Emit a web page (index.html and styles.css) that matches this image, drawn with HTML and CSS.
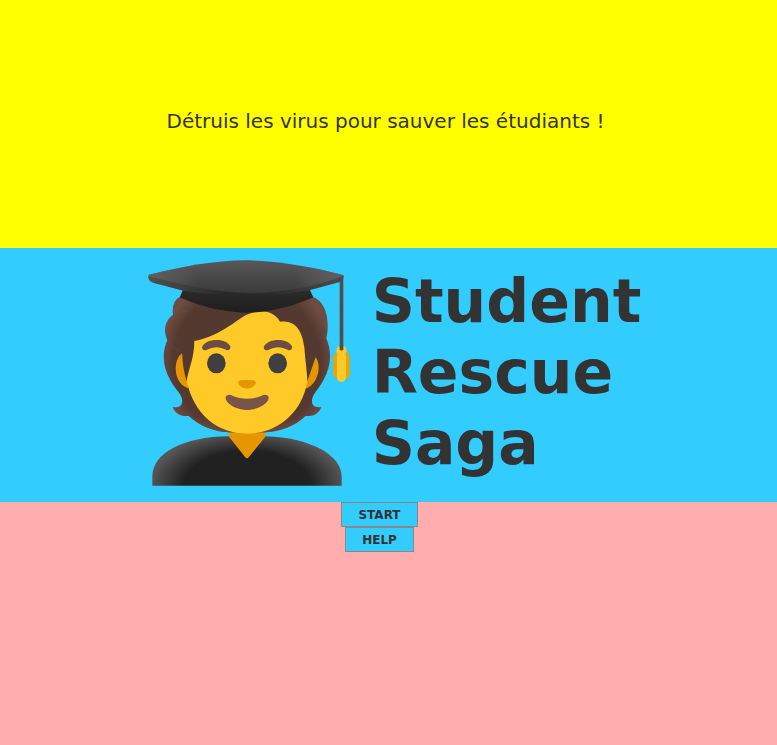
FILE: index.html
```html
<!DOCTYPE html>
<html lang="fr">
<head>
<meta charset="utf-8">
<meta name="viewport" content="width=device-width, initial-scale=1">
<title>Student Rescue Saga</title>
<link rel="stylesheet" href="styles.css">
</head>
<body>
<header class="intro"><p>Détruis les virus pour sauver les étudiants !</p></header>
<main class="banner">
<svg class="student" viewBox="-18 -6 678 762" aria-hidden="true">
<defs>
<radialGradient id="gown" gradientUnits="userSpaceOnUse" cx="321" cy="710" r="290" gradientTransform="translate(0 312) scale(1 .56)">
<stop offset=".66" stop-color="#212121"/><stop offset="1" stop-color="#555"/>
</radialGradient>
<radialGradient id="hair" gradientUnits="userSpaceOnUse" cx="321" cy="335" r="262">
<stop offset=".84" stop-color="#543930"/><stop offset="1" stop-color="#6d4c41"/>
</radialGradient>
<linearGradient id="hairbase" x1="0" y1="500" x2="0" y2="548" gradientUnits="userSpaceOnUse">
<stop stop-color="#6d4c41" stop-opacity="0"/><stop offset="1" stop-color="#6d4c41"/>
</linearGradient>
<linearGradient id="board" x1="0" y1="31" x2="0" y2="130" gradientUnits="userSpaceOnUse">
<stop stop-color="#585858"/><stop offset="1" stop-color="#3a3a3a"/>
</linearGradient>
<linearGradient id="tip" x1="25" y1="0" x2="611" y2="0" gradientUnits="userSpaceOnUse">
<stop stop-color="#616161"/><stop offset=".25" stop-color="#616161" stop-opacity="0"/><stop offset=".75" stop-color="#616161" stop-opacity="0"/><stop offset="1" stop-color="#616161"/>
</linearGradient>
<linearGradient id="rim" x1="25" y1="0" x2="611" y2="0" gradientUnits="userSpaceOnUse">
<stop stop-color="#505050"/><stop offset=".4" stop-color="#282828"/><stop offset=".6" stop-color="#282828"/><stop offset="1" stop-color="#4c4c4c"/>
</linearGradient>
<linearGradient id="cap" x1="0" y1="115" x2="0" y2="188" gradientUnits="userSpaceOnUse">
<stop stop-color="#2c2c2c"/><stop offset="1" stop-color="#1e1e1e"/>
</linearGradient>
</defs>
<path fill="url(#gown)" d="M37 707V679C37 610 130 560 266 559H377C510 563 605 615 605 680V707Z"/>
<path fill="#e59600" d="M267 535H376V560L327 621Q321 629 315 621L267 560Z"/>
<path fill="url(#hair)" d="M119 141Q94 154 99 194C76 211 68 239 82 271C64 310 69 352 91 391C108 423 127 432 127 454C124 473 112 473 98 471C104 490 121 500 146 498C179 528 223 545 267 547H376C424 544 464 528 497 498C522 500 538 489 544 471C532 473 516 472 516 454C516 432 533 423 550 391C574 350 576 305 559 265C570 215 560 156 519 141Z"/>
<path fill="url(#hairbase)" d="M146 498C179 528 223 545 267 547H376C424 544 464 528 497 498Z"/>
<path d="M99 196Q120 184 145 184M82 271Q92 290 118 304" fill="none" stroke="#6d4c41" stroke-width="3" opacity=".55"/>
<path fill="#e59600" d="M126 310C101 327 95 396 144 415L151 384ZM526 320C546 343 536 402 497 416L491 384Z"/>
<path fill="#543930" d="M163 273L200 230L150 230C120 267 122 336 140 394L163 350ZM487 260L527 321L502 394L484 380Z"/>
<path fill="#ffca28" d="M163 273C245 256 290 208 320 194C363 174 403 183 420 215C467 208 487 244 493 292C495 328 501 360 502 394C486 493 408 551 321 551C231 551 162 493 140 394C145 357 163 325 163 273Z"/>
<path fill="url(#cap)" d="M131 115L119 142C180 169 249 187 321 188C392 187 460 169 520 142L508 116Z"/>
<path fill="url(#rim)" d="M25 77C24 90 30 96 44 100L130 122L210 132H430L508 121L600 96Q611 92 611 76C430 70 200 70 25 77Z"/>
<path fill="url(#board)" d="M25 75C130 48 225 32 315 31C413 32 514 50 611 76L600 82C510 114 412 130 321 130C228 127 132 106 37 82Z"/>
<path fill="url(#tip)" d="M25 75C130 48 225 32 315 31C413 32 514 50 611 76L600 82C510 114 412 130 321 130C228 127 132 106 37 82Z"/>
<path fill="#504f4f" d="M599 96L610 78V300H599Z"/>
<path fill="#ffca28" d="M589 306Q589 288 600 288H610Q620 289 620 306L617 325H592Z"/>
<path fill="#e2a610" d="M587 308Q579 313 579 330V375Q580 383 591 385L596 308ZM622 308Q630 313 630 330V375Q629 383 618 385L613 308Z"/>
<path fill="#ffca28" d="M596 303H613Q618 310 618 328V382Q616 396 604 396Q591 394 591 382V328Q591 310 596 303Z"/>
<path fill="#504f4f" d="M599 286H610V298Q604 306 599 298Z"/>
<ellipse cx="229" cy="340" rx="28" ry="30" fill="#404040"/><ellipse cx="413" cy="340" rx="28" ry="30" fill="#404040"/>
<path fill="#6d4c41" d="M187 289C195 276 211 270 230 270C250 270 265 277 271 289C273 299 265 303 258 299C238 289 220 289 201 299C191 304 184 297 187 289ZM372 289C380 276 396 270 415 270C435 270 450 277 456 289C458 299 450 303 443 299C423 289 405 289 386 299C376 304 369 297 372 289Z"/>
<path fill="#e59600" d="M300 391Q321 389 342 391Q349 394 347 402C334 420 308 421 295 402Q293 394 300 391Z"/>
<path fill="#795548" d="M257 441C261 433 269 432 279 438C306 449 336 449 363 438C373 432 382 433 386 441C388 463 348 480 321 480C294 480 254 462 257 441Z"/>
</svg>
<h1>Student<br>Rescue<br>Saga</h1>
</main>
<nav class="actions"><button type="button">START</button><button type="button">HELP</button></nav>
</body>
</html>
```
FILE: styles.css
```css
* {
  box-sizing: border-box;
}

body {
  margin: 0;
  min-height: 100vh;
  display: grid;
  grid-template-rows: 248fr auto 243fr;
  font-family: "DejaVu Sans", sans-serif;
  color: #333;
  background: #ffadad;
}

.intro {
  display: flex;
  align-items: center;
  justify-content: center;
  padding: 0 6px 6px 0;
  background: #ff0;
  font-size: 20px;
  text-align: center;
}

.intro p {
  margin: 0;
}

.banner {
  display: flex;
  align-items: center;
  justify-content: center;
  gap: 12px;
  padding-right: 2px;
  background: #3cf;
}

.student {
  display: block;
  width: 226px;
  height: 254px;
}

h1 {
  margin: 0;
  padding-bottom: 6px;
  font-size: 60px;
  line-height: 71px;
}

.actions {
  display: flex;
  flex-direction: column;
  align-items: center;
  padding-right: 18px;
  background: #ffadad;
}

button {
  padding: 5px 16px 4px;
  border: 1px solid #888;
  background: #3cf;
  color: #333;
  font: bold 12px/14px "DejaVu Sans", sans-serif;
  cursor: pointer;
}
```
